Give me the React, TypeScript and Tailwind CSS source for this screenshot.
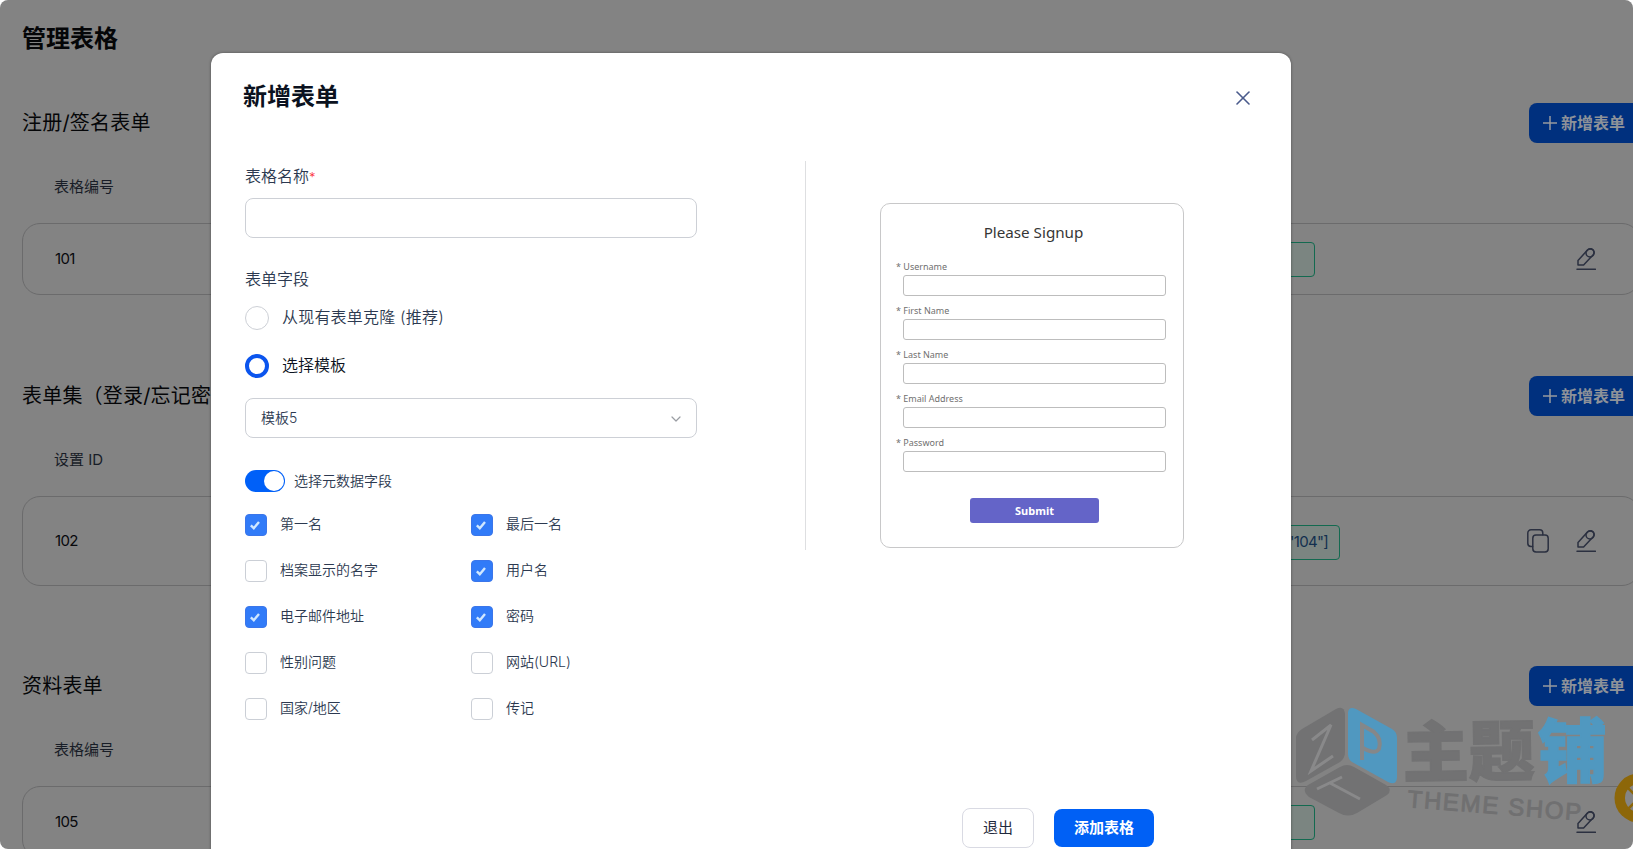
import React from 'react';
import { X, ChevronDown } from 'lucide-react';

interface FormRow {
  title: string;
  column: string;
  id: string;
  shortcode?: string;
}

const SECTIONS: FormRow[] = [
  { title: '注册/签名表单', column: '表格编号', id: '101' },
  { title: '表单集（登录/忘记密码）', column: '设置 ID', id: '102', shortcode: '="104"]' },
  { title: '资料表单', column: '表格编号', id: '105' },
];

const META_FIELDS = [
  { label: '第一名', checked: true },
  { label: '最后一名', checked: true },
  { label: '档案显示的名字', checked: false },
  { label: '用户名', checked: true },
  { label: '电子邮件地址', checked: true },
  { label: '密码', checked: true },
  { label: '性别问题', checked: false },
  { label: '网站(URL)', checked: false },
  { label: '国家/地区', checked: false },
  { label: '传记', checked: false },
];

const PREVIEW_FIELDS = ['Username', 'First Name', 'Last Name', 'Email Address', 'Password'];

const EditIcon = () => (
  <svg width="20" height="22" viewBox="0 0 20 22" fill="none" stroke="#2b3040" strokeWidth="1.5" strokeLinecap="round" strokeLinejoin="round">
    <path d="M10.6 3.1 12 1.8a3.6 3.6 0 0 1 5.2 5L7.6 17H2v-4.6L10.6 3.1Z" />
    <circle cx="14" cy="5" r="4" />
    <path d="M1 21.2h18.4" />
  </svg>
);

const CopyIcon = () => (
  <svg width="22" height="24" viewBox="0 0 22 24" fill="none" stroke="#2b3040" strokeWidth="1.5" strokeLinecap="round" strokeLinejoin="round">
    <rect x="5.8" y="6" width="15.4" height="17" rx="3.2" />
    <path d="M5.6 17.4H4A3.2 3.2 0 0 1 .8 14.2V4A3.2 3.2 0 0 1 4 .8h8.6A3.2 3.2 0 0 1 15.8 4v1.8" />
  </svg>
);

const Section: React.FC<{ row: FormRow }> = ({ row }) => {
  const isSet = Boolean(row.shortcode);

  return (
    <section className={isSet ? 'mt-px' : ''}>
      <div className="flex h-10 items-center justify-between">
        <h2 className="text-xl tracking-[0.2px] text-[#050608]">{row.title}</h2>
        <button className="flex h-10 w-[111px] items-center gap-1 rounded-lg bg-[#00307e] pl-3.5 text-base font-bold whitespace-nowrap text-[#8e9299]">
          <svg width="14" height="14" viewBox="0 0 14 14" stroke="#96999f" strokeWidth="1.5"><path d="M7 0v14M0 7h14" /></svg>
          <span>新增表单</span>
        </button>
      </div>
      <div className="flex h-20 items-center pt-[9px] pl-8 text-[15px] text-[#181d27]">{row.column}</div>
      <div className={`flex items-center rounded-[18px] border border-[#6b6b6c] pr-[43px] pl-[31px] ${isSet ? 'h-[90px]' : 'h-[72px]'}`}>
        <span className="w-[1046px] pl-px text-[15px] tracking-[-0.6px] text-[#08090c]">{row.id}</span>
        <span className={`flex h-[35px] items-center justify-end rounded border border-[#136a50] bg-[#7b8581] pr-[11px] text-[15px] tracking-[-0.7px] text-[#12304f] ${isSet ? 'mt-0.5 w-[240px]' : 'w-[215px]'}`}>
          {row.shortcode}
        </span>
        <div className="ml-auto flex items-center gap-[27px]">
          {isSet && <CopyIcon />}
          <EditIcon />
        </div>
      </div>
    </section>
  );
};

const Checkbox: React.FC<{ checked: boolean }> = ({ checked }) => (
  <span className={`flex size-[22px] items-center justify-center rounded border ${checked ? 'border-[#3b76ea] bg-[#317bf8]' : 'border-[#cbcfd6] bg-white'}`}>
    {checked && (
      <svg className="mr-0.5" width="10" height="9" viewBox="0 0 10 9" fill="none" stroke="#d0e8ff" strokeWidth="2.4"><path d="M.8 4.4 3.8 7.2 9 .9" /></svg>
    )}
  </span>
);

const SignupPreview = () => (
  <div className="flex h-[345px] w-[304px] flex-col rounded-[10px] border border-[#c8c8c9] pt-4 font-['Noto_Sans']">
    <p className="pl-[3px] text-center text-[15.2px] leading-6 text-[#363636]">Please Signup</p>
    <div className="mt-[15px] pr-[17px] pl-4">
      {PREVIEW_FIELDS.map((field) => (
        <div key={field} className="h-11">
          <p className="-ml-px h-4 text-[9px] leading-[15px] text-[#707070]">* {field}</p>
          <div className="ml-[6px] h-[21px] rounded-[3px] border border-[#bdbdbd]"></div>
        </div>
      ))}
    </div>
    <button className="mt-[19px] ml-[89px] h-[25px] w-[129px] rounded-[3px] bg-[#6464c8] pt-px text-[11px] font-bold text-white">Submit</button>
  </div>
);

const Watermark = () => (
  <svg className="absolute top-[700px] left-[1290px] overflow-visible" width="330" height="130" viewBox="0 0 330 130">
    <path d="M46 9Q54 5 55 14V52Q55 58 50 62L16 81Q6 86 6 76V38Q6 33 12 29Z" fill="#727273" />
    <path d="M58 12Q59 6 66 9L102 29Q107 32 107 38V78Q106 86 98 82L62 62Q58 59 58 54Z" fill="#5098c0" />
    <path d="M18 85 50 67Q57 63 64 67L96 85Q103 90 97 95L67 113Q58 118 49 113L19 97Q11 90 18 85Z" fill="#727273" />
    <g fill="none" stroke="#89898a" strokeWidth="3">
      <path d="m22 40 19-15-20 46 22-15" />
      <path d="m27 89 25-12M40 83l30 16" />
    </g>
    <path d="M72 60V25L84 32Q92 39 89 49 85 55 73 48" fill="none" stroke="#858789" strokeWidth="4" />
    <g fontFamily="'Noto Sans CJK SC', sans-serif" fontWeight="900">
      <text x="113" y="77" fontSize="66" fill="#727273" stroke="#727273" strokeWidth="1.5" transform="rotate(-1 113 76)">主题</text>
      <text x="248" y="77" fontSize="69" fill="#5098c0" stroke="#5098c0" strokeWidth="1.5">铺</text>
    </g>
    <text transform="rotate(4.5 118 108)" x="117" y="107" fontSize="24" fontFamily="'Liberation Sans', sans-serif" fill="#707071" stroke="#707071" strokeWidth="0.9" textLength="174">THEME SHOP</text>
  </svg>
);

const AddFormModal = () => (
  <div className="absolute top-[53px] left-[211px] h-[820px] w-[1080px] rounded-xl bg-white shadow-[0_0_3px_rgba(0,0,0,0.4)]">
    <div className="flex h-[86px] items-center justify-between pr-9 pl-8">
      <h2 className="pt-0.5 text-2xl font-bold text-[#0b1220]">新增表单</h2>
      <X className="mt-1" size={24} strokeWidth={1.6} color="#4a5a8c" />
    </div>

    <div className="flex h-[669px] pt-[22px] pl-[34px]">
      <div className="w-[560px] text-base font-[350] text-[#2c3950]">
        <p className="h-[37px] pt-[3px] leading-6">表格名称<span className="text-[13px] text-red-500">*</span></p>
        <div className="h-10 w-[452px] rounded-lg border border-[#cdd0d6]"></div>

        <p className="mt-[29px] leading-6">表单字段</p>
        <div className="mt-[15px] flex h-6 items-center gap-[13px]">
          <span className="size-6 rounded-full border border-[#cdd0d6]"></span>
          <span className="-mt-0.5 tracking-[0.2px]">从现有表单克隆 (推荐)</span>
        </div>
        <div className="mt-6 flex h-6 items-center gap-[13px] text-[#0b1220]">
          <span className="size-6 rounded-full border-4 border-[#0b55ee]"></span>
          <span className="-mt-0.5">选择模板</span>
        </div>
        <div className="mt-5 flex h-10 w-[452px] items-center justify-between rounded-lg border border-[#cdd0d6] pr-3 pl-[15px] text-sm">
          <span>模板5</span>
          <ChevronDown className="mt-0.5" size={16} strokeWidth={1.8} color="#9a9da3" />
        </div>

        <div className="mt-8 flex h-[22px] items-center gap-[9px] text-sm">
          <span className="flex h-[22px] w-10 justify-end rounded-full bg-[#0060f8] p-px">
            <span className="size-5 rounded-full bg-white"></span>
          </span>
          <span>选择元数据字段</span>
        </div>

        <div className="mt-[22px] grid w-[452px] grid-cols-2 gap-y-6 text-sm">
          {META_FIELDS.map(({ label, checked }) => (
            <div key={label} className="flex h-[22px] items-center gap-[13px]">
              <Checkbox checked={checked} />
              <span className="-mt-[3px]">{label}</span>
            </div>
          ))}
        </div>
      </div>

      <div className="h-[389px] border-l border-[#dedfe1] pt-[42px] pl-[74px]">
        <SignupPreview />
      </div>
    </div>

    <div className="flex items-center gap-5 pl-[751px]">
      <button className="h-10 w-[72px] rounded-lg border border-[#d9dae3] text-[15px] text-[#1f2a3d]">退出</button>
      <button className="h-[38px] w-[100px] rounded-lg bg-[#0060f5] text-[15px] font-bold text-white">添加表格</button>
    </div>
  </div>
);

const App: React.FC = () => {
  return (
    <div className="h-[849px] w-[1633px] bg-white font-[Inter,'Noto_Sans_CJK_SC',sans-serif]">
      <div className="relative h-full overflow-hidden rounded-lg bg-[#838383]">
        <div className="w-[1640px] pl-[22px]">
          <h1 className="pt-[21px] text-2xl leading-9 font-bold text-[#050608]">管理表格</h1>
          <div className="mt-[46px] flex flex-col gap-20">
            {SECTIONS.map((row) => <Section key={row.title} row={row} />)}
          </div>
        </div>

        <Watermark />

        {/* floating help button, cut off by the edge */}
        <svg className="absolute top-[773px] left-[1614px]" width="50" height="50" viewBox="0 0 50 50">
          <circle cx="25" cy="25" r="24.5" fill="#8d6709" />
          <circle cx="25" cy="25" r="14" fill="#858585" />
          <path d="m14 15 22 22M14 36l22-22" stroke="#8d6709" strokeWidth="2.5" />
        </svg>

        <AddFormModal />
      </div>
    </div>
  );
};

export default App;
